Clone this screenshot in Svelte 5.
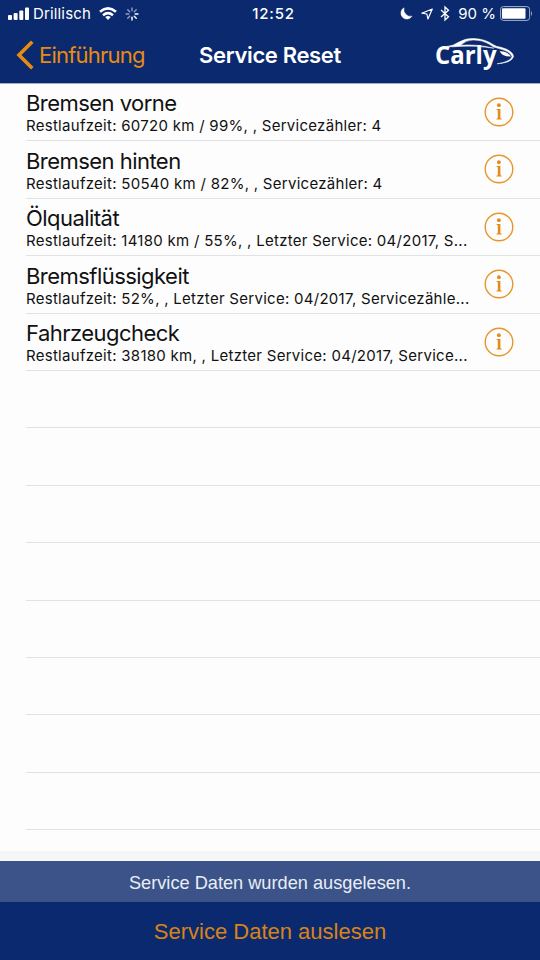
<script>
    const services = [
        { name: "Bremsen vorne", detail: "Restlaufzeit: 60720 km / 99%, , Servicezähler: 4" },
        { name: "Bremsen hinten", detail: "Restlaufzeit: 50540 km / 82%, , Servicezähler: 4" },
        { name: "Ölqualität", detail: "Restlaufzeit: 14180 km / 55%, , Letzter Service: 04/2017, S..." },
        { name: "Bremsflüssigkeit", detail: "Restlaufzeit: 52%, , Letzter Service: 04/2017, Servicezähle..." },
        { name: "Fahrzeugcheck", detail: "Restlaufzeit: 38180 km, , Letzter Service: 04/2017, Service..." }
    ];
    const emptyRows = Array(8);
    const spokes = [0, 45, 90, 135, 180, 225, 270, 315];
</script>

<main class="screen">
    <header>
        <div class="status-bar">
            <div class="carrier">
                <svg class="signal" width="22" height="14" viewBox="0 0 22 14" fill="#fff">
                    <rect x="0" y="8" width="4" height="5" rx="1" />
                    <rect x="5.6" y="6" width="4" height="7" rx="1" />
                    <rect x="11.3" y="3.5" width="4" height="9.5" rx="1" />
                    <rect x="17" y="0.5" width="4" height="12.5" rx="1" />
                </svg>
                <span class="operator">Drillisch</span>
                <svg class="wifi" width="18" height="14" viewBox="0 0 18 14" fill="none" stroke="#fff" stroke-width="2.5">
                    <path d="M1 4.7Q9-2 17 4.7" />
                    <path d="M4 8.2Q9 4 14 8.2" />
                    <path d="M6.2 10.1Q9 7.8 11.8 10.1L9 13z" fill="#fff" stroke="none" />
                </svg>
                <svg class="spinner" width="14" height="14" viewBox="-7 -7 14 14" stroke="#fff" stroke-width="1.4" stroke-linecap="round">
                    {#each spokes as angle, i}
                        <path d="M0-3.2V-6" transform="rotate({angle})" opacity={i > 1 && i < 5 ? 1 : 0.55} />
                    {/each}
                </svg>
            </div>
            <span class="time">12:52</span>
            <div class="indicators">
                <svg class="moon" width="12" height="13" viewBox="0 0 12 13">
                    <path d="M4 .8A6 6 0 1 0 12 9.2Q8.5 10 6 7.5 3 4.6 4 .8z" fill="#fff" stroke="#fff" stroke-width="0.5" />
                </svg>
                <svg class="location" width="12" height="12" viewBox="0 0 12 12">
                    <path d="M.8 5.2L11.3 1 6.9 11 5.9 6z" fill="none" stroke="#fff" stroke-width="1.2" stroke-linejoin="round" />
                </svg>
                <svg class="bluetooth" width="10" height="15" viewBox="0 0 10 15">
                    <path d="M1 4L8.5 10.8 5 14V1L8.5 4.2 1 11" fill="none" stroke="#fff" stroke-width="1.3" />
                </svg>
                <span class="percent">90 %</span>
                <svg class="battery" width="33" height="15" viewBox="0 0 33 15">
                    <rect x="0.6" y="0.6" width="29" height="13.8" rx="2.8" fill="none" stroke="#a4b0cf" stroke-width="1" />
                    <rect x="2" y="2.2" width="23.5" height="10.6" rx="1" fill="#fff" />
                    <path d="M31 5Q33 7.5 31 10z" fill="#a4b0cf" />
                </svg>
            </div>
        </div>
        <nav>
            <div class="back">
                <svg width="18" height="28" viewBox="0 0 18 28">
                    <path d="M15 2L3 14l12 12" fill="none" stroke="#e98b10" stroke-width="3.6" stroke-linecap="square" />
                </svg>
                <span>Einführung</span>
            </div>
            <h1>Service Reset</h1>
            <svg class="logo" width="80" height="36" viewBox="0 0 80 36">
                <text x="0" y="27" textLength="61.5" lengthAdjust="spacingAndGlyphs">Carly</text>
                <path d="M12 9.4Q18 9 23 5.5Q31 .7 39 1.5Q50 2 58 7.5Q61 9.7 66 10.3Q78 13.5 78.6 19.5Q76.5 26 62 26.8Q76 24.5 77 19.5Q75.5 14.5 64 11.6Q58 10.5 54 7Q47 2.8 38 3Q31 3 25.5 8.3Q41 6.8 59 11.2Q41 8.3 24 9.4Q17 10.3 12 9.4z" fill="#fff" stroke="#fff" stroke-width="0.5" />
                <path d="M64.5 14.3Q72 14 76 19.5Q68 20 64.5 14.3z" fill="#fff" />
            </svg>
        </nav>
    </header>

    <ul>
        {#each services as service}
            <li>
                <div class="texts">
                    <h2>{service.name}</h2>
                    <p>{service.detail}</p>
                </div>
                <svg class="info" width="30" height="30" viewBox="0 0 30 30">
                    <circle cx="15" cy="15" r="13.8" fill="none" stroke="#e8952b" stroke-width="1.4" />
                    <circle cx="14.9" cy="8.2" r="1.9" fill="#e48a18" />
                    <path d="M12.6 12h3.8v9.3l1.3.4v.8h-5.2v-.8l1.3-.4v-8.1l-1.2-.4z" fill="#e48a18" />
                </svg>
            </li>
        {/each}
        {#each emptyRows as _}
            <li></li>
        {/each}
    </ul>

    <footer>
        <div class="message">Service Daten wurden ausgelesen.</div>
        <button>Service Daten auslesen</button>
    </footer>
</main>

<style>
    :global(body) {margin: 0;}

    .screen {
        display: flex;
        flex-direction: column;
        width: 540px;
        height: 960px;
        overflow: hidden;
        background: #f5f7f6;
        color: #111;
        font-family: Inter, "Liberation Sans", sans-serif;
    }
    h1, h2, p, ul {margin: 0; padding: 0;}
    svg {display: block; flex: none; overflow: visible;}
    span, h1, h2, p {white-space: nowrap;}

    header {
        box-sizing: border-box;
        height: 84px;
        flex: none;
        background: #0b296e;
        border-bottom: 1px solid #a3aec8;
        color: #fff;
    }
    .status-bar {
        display: grid;
        grid-template-columns: 1fr auto 1fr;
        align-items: center;
        height: 27px;
        padding: 0 7px 0 8px;
        font-size: 15px;
    }
    .carrier, .indicators {display: flex; align-items: center;}
    .indicators {justify-content: flex-end;}
    .operator {margin-left: 3px; letter-spacing: 0.15px;}
    .wifi {margin-left: 8px;}
    .spinner {margin-left: 8px;}
    .time {padding-left: 6px; font-weight: 500; letter-spacing: 0.8px;}
    .location {margin-left: 9px;}
    .bluetooth {margin-left: 7px;}
    .percent {margin-left: 8px;}
    .battery {margin-left: 4px;}

    nav {
        display: grid;
        grid-template-columns: 1fr auto 1fr;
        align-items: center;
        height: 56px;
        padding: 0 16px;
    }
    .back {
        display: flex;
        align-items: center;
        gap: 5px;
        color: #e98b10;
        font-size: 22px;
        letter-spacing: -0.78px;
    }
    h1 {font-size: 22px; font-weight: 600; letter-spacing: -0.35px;}
    .logo {justify-self: end; margin-right: 9px;}
    .logo text {
        fill: #fff;
        font: 700 25px "Open Sans", sans-serif;
    }

    ul {
        height: 767px;
        flex: none;
        list-style: none;
        background: #fdfdfd;
    }
    li {
        box-sizing: border-box;
        display: flex;
        justify-content: space-between;
        height: 57.4px;
        margin-left: 26px;
        padding-right: 26px;
        border-bottom: 1px solid #e1e2e3;
    }
    h2 {
        margin-top: 6.4px;
        font-size: 22px;
        font-weight: 400;
        line-height: 27px;
        letter-spacing: -0.54px;
    }
    p {
        font-size: 15px;
        line-height: 18px;
        letter-spacing: 0.28px;
    }
    .info {margin-top: 13px;}

    footer {
        margin-top: auto;
        font-family: "Liberation Sans", Arial, sans-serif;
        text-align: center;
    }
    .message {
        height: 41px;
        background: #3b5389;
        color: #e9eef6;
        font-size: 18.2px;
        line-height: 44px;
    }
    button {
        display: block;
        width: 100%;
        height: 58px;
        padding: 2px 0 0;
        border: 0;
        background: #0b296e;
        color: #d98316;
        font: inherit;
        font-size: 22px;
    }
</style>
